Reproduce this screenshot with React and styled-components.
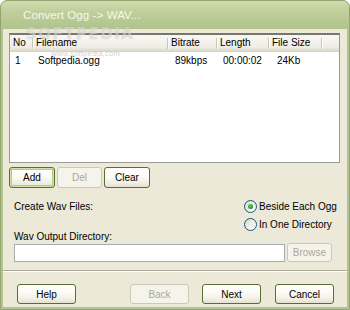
import React from "react";
import styled, { createGlobalStyle } from "styled-components";

const Global = createGlobalStyle`
  html, body { margin: 0; padding: 0; background: #ffffff; }
  body { width: 350px; height: 310px; overflow: hidden; }
  * { box-sizing: border-box; }
`;

const FONT = `"Liberation Sans", Arial, sans-serif`;

const Window = styled.div`
  position: relative;
  width: 350px;
  height: 310px;
  display: flex;
  flex-direction: column;
  border: 1px solid #93a672;
  border-radius: 7px 7px 0 0;
  padding: 0 2px 2px 2px;
  background: #b3c58f;
  overflow: hidden;
`;

const TitleBar = styled.div`
  height: 28px;
  margin: 0 -2px;
  padding-left: 22px;
  display: flex;
  align-items: center;
  background: linear-gradient(#d0dcb1 0%, #c0d09c 35%, #b6c891 75%, #b1c38d 100%);
  border-radius: 6px 6px 0 0;
  font: 11.5px ${FONT};
  color: #f6f8ef;
  letter-spacing: 0.1px;
`;

const Client = styled.div`
  flex: 1;
  display: flex;
  flex-direction: column;
  background: #ece9d8;
  font: 10px ${FONT};
  color: #000;
`;

const ListView = styled.div`
  margin: 4px 7px 0 6px;
  height: 130px;
  background: #fff;
  border: 1px solid #9a9b94;
  border-top: 2px solid #75766f;
`;

const HeaderRow = styled.div`
  display: flex;
  height: 17px;
  background: linear-gradient(#f8f7f2 0%, #efeee6 70%, #e2dfd0 88%, #d4d0c0 100%);
`;

const HeaderCell = styled.div`
  position: relative;
  width: ${(p) => (p.$w ? `${p.$w}px` : "auto")};
  flex: ${(p) => (p.$w ? "none" : "1")};
  padding-left: 3px;
  line-height: 16px;
  white-space: nowrap;
  &::after {
    content: "";
    display: ${(p) => (p.$w ? "block" : "none")};
    position: absolute;
    right: 0;
    top: 3px;
    bottom: 3px;
    width: 1px;
    background: #c7c5b3;
    box-shadow: 1px 0 0 #ffffff;
  }
`;

const Row = styled.div`
  display: flex;
  height: 15px;
  margin-top: 1px;
`;

const Cell = styled.div`
  width: ${(p) => (p.$w ? `${p.$w}px` : "auto")};
  flex: ${(p) => (p.$w ? "none" : "1")};
  padding-left: ${(p) => p.$pad ?? 6}px;
  line-height: 15px;
  white-space: nowrap;
`;

const ButtonRow = styled.div`
  display: flex;
  gap: 2px;
  margin: 4px 0 0 6px;
`;

const Btn = styled.button`
  width: ${(p) => p.$w}px;
  height: ${(p) => p.$h}px;
  padding: 0;
  font: 10px ${FONT};
  color: ${(p) => (p.disabled ? "#aca899" : "#000")};
  border: 1px solid ${(p) => (p.disabled ? "#cac8bb" : "#55702f")};
  border-radius: 3px;
  background: ${(p) =>
    p.disabled
      ? "#f5f4ea"
      : "linear-gradient(#ffffff 0%, #fbfaf5 45%, #f0eee2 80%, #e3e0cd 100%)"};
  box-shadow: ${(p) =>
    p.$default ? "inset 0 0 0 1px #cfe1a8, inset 0 0 0 2px #b4cc84" : "none"};
  flex: none;
`;

const Options = styled.div`
  display: grid;
  grid-template-columns: 230px 1fr;
  margin-top: 12px;
  padding-left: 11px;
`;

const FieldLabel = styled.div`
  line-height: 13px;
  height: 13px;
  white-space: nowrap;
`;

const RadioGroup = styled.div`
  display: flex;
  flex-direction: column;
  gap: 5px;
`;

const RadioRow = styled.label`
  display: flex;
  align-items: center;
  gap: 2px;
  height: 13px;
  line-height: 13px;
  white-space: nowrap;
`;

const RadioCircle = styled.span`
  width: 13px;
  height: 13px;
  border-radius: 50%;
  border: 1px solid #1c5180;
  background: linear-gradient(135deg, #dcd9c8 0%, #f2f1ea 55%, #ffffff 100%);
  display: flex;
  align-items: center;
  justify-content: center;
  flex: none;
  &::after {
    content: "";
    display: ${(p) => (p.$checked ? "block" : "none")};
    width: 5px;
    height: 5px;
    border-radius: 50%;
    background: radial-gradient(circle at 40% 35%, #5fd85f 0%, #21a121 60%, #1a8a1a 100%);
  }
`;

const DirLabel = styled.div`
  padding-left: 11px;
  height: 12px;
  line-height: 12px;
`;

const InputRow = styled.div`
  display: flex;
  align-items: flex-start;
  gap: 2px;
  padding-left: 11px;
`;

const TextBox = styled.div`
  width: 271px;
  height: 18px;
  margin-top: 1px;
  background: #fff;
  border: 1px solid #a5acb2;
`;

const Separator = styled.div`
  margin-top: 8px;
  height: 2px;
  border-top: 1px solid #aca899;
  border-bottom: 1px solid #ffffff;
`;

const Footer = styled.div`
  display: flex;
  margin-top: 12px;
  padding: 0 13px 0 14px;
`;

const FooterRight = styled.div`
  margin-left: auto;
  display: flex;
  gap: 13px;
  & > :last-child {
    margin-left: 1px;
  }
`;

const WatermarkBig = styled.div`
  position: absolute;
  left: 25px;
  top: 24px;
  font: bold 15px "DejaVu Sans", sans-serif;
  letter-spacing: 1.5px;
  color: rgba(255, 255, 255, 0.45);
  text-shadow: 0 0 1px rgba(110, 110, 110, 0.35);
  pointer-events: none;
`;

const WatermarkSmall = styled.div`
  position: absolute;
  left: 50px;
  top: 48px;
  font: 8px ${FONT};
  color: rgba(150, 150, 150, 0.45);
  pointer-events: none;
`;

const cols = [23, 135, 49, 52, 53];

export default function App() {
  return (
    <>
      <Global />
      <Window>
        <TitleBar>Convert Ogg -&gt; WAV...</TitleBar>
        <Client>
          <ListView>
            <HeaderRow>
              <HeaderCell $w={cols[0]}>No</HeaderCell>
              <HeaderCell $w={cols[1]}>Filename</HeaderCell>
              <HeaderCell $w={cols[2]}>Bitrate</HeaderCell>
              <HeaderCell $w={cols[3]}>Length</HeaderCell>
              <HeaderCell $w={cols[4]}>File Size</HeaderCell>
              <HeaderCell />
            </HeaderRow>
            <Row>
              <Cell $w={cols[0]} $pad={5}>1</Cell>
              <Cell $w={cols[1]} $pad={5}>Softpedia.ogg</Cell>
              <Cell $w={cols[2]} $pad={7}>89kbps</Cell>
              <Cell $w={cols[3]} $pad={6}>00:00:02</Cell>
              <Cell $w={cols[4]} $pad={8}>24Kb</Cell>
              <Cell />
            </Row>
          </ListView>
          <ButtonRow>
            <Btn $w={46} $h={21} $default>Add</Btn>
            <Btn $w={45} $h={21} disabled>Del</Btn>
            <Btn $w={46} $h={21}>Clear</Btn>
          </ButtonRow>
          <Options>
            <FieldLabel>Create Wav Files:</FieldLabel>
            <RadioGroup>
              <RadioRow>
                <RadioCircle $checked />
                Beside Each Ogg
              </RadioRow>
              <RadioRow>
                <RadioCircle />
                In One Directory
              </RadioRow>
            </RadioGroup>
          </Options>
          <DirLabel>Wav Output Directory:</DirLabel>
          <InputRow>
            <TextBox />
            <Btn $w={45} $h={19} disabled>Browse</Btn>
          </InputRow>
          <Separator />
          <Footer>
            <Btn $w={59} $h={20}>Help</Btn>
            <FooterRight>
              <Btn $w={59} $h={20} disabled>Back</Btn>
              <Btn $w={59} $h={20}>Next</Btn>
              <Btn $w={59} $h={20}>Cancel</Btn>
            </FooterRight>
          </Footer>
        </Client>
        <WatermarkBig>SOFTPEDIA</WatermarkBig>
        <WatermarkSmall>www.softpedia.com</WatermarkSmall>
      </Window>
    </>
  );
}
